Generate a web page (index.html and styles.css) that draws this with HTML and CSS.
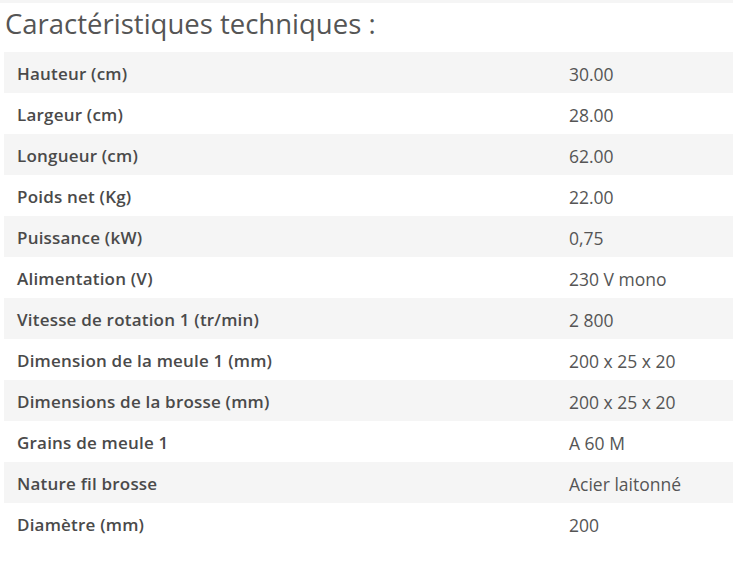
FILE: index.html
```html
<!DOCTYPE html>
<html lang="fr">
<head>
<meta charset="utf-8">
<link rel="stylesheet" href="styles.css">
</head>
<body>
<div class="topbar"></div>
<section class="specs">
  <h2 class="specs-title">Caractéristiques techniques :</h2>
  <table class="specs-table">
    <tbody>
      <tr><th>Hauteur (cm)</th><td>30.00</td></tr>
      <tr><th>Largeur (cm)</th><td>28.00</td></tr>
      <tr><th>Longueur (cm)</th><td>62.00</td></tr>
      <tr><th>Poids net (Kg)</th><td>22.00</td></tr>
      <tr><th>Puissance (kW)</th><td>0,75</td></tr>
      <tr><th>Alimentation (V)</th><td>230 V mono</td></tr>
      <tr><th>Vitesse de rotation 1 (tr/min)</th><td>2 800</td></tr>
      <tr><th>Dimension de la meule 1 (mm)</th><td>200 x 25 x 20</td></tr>
      <tr><th>Dimensions de la brosse (mm)</th><td>200 x 25 x 20</td></tr>
      <tr><th>Grains de meule 1</th><td>A 60 M</td></tr>
      <tr><th>Nature fil brosse</th><td>Acier laitonné</td></tr>
      <tr><th>Diamètre (mm)</th><td>200</td></tr>
    </tbody>
  </table>
</section>
</body>
</html>
```
FILE: styles.css
```css
html, body {
  margin: 0;
  padding: 0;
  background: #ffffff;
  overflow: hidden;
}
body {
  font-family: "Open Sans", "Noto Sans", sans-serif;
  color: #555555;
}
.topbar {
  height: 3px;
  background: #f5f5f5;
}
.specs {
  padding-left: 4px;
}
.specs-title {
  margin: 0;
  height: 49px;
  font-size: 27.5px;
  font-weight: 400;
  line-height: 42px;
  color: #555555;
  padding-left: 1px;
}
.specs-table {
  width: 733px;
  border-collapse: collapse;
  font-size: 17px;
}
.specs-table tr {
  height: 41px;
}
.specs-table tr:nth-child(odd) {
  background: #f5f5f5;
}
.specs-table th {
  text-align: left;
  font-weight: 600;
  letter-spacing: 0.2px;
  color: #4a4a4a;
  padding: 2px 0 0 13px;
  width: 552px;
}
.specs-table td {
  padding: 2px 0 0 0;
  font-size: 17.5px;
  color: #555555;
}
```
